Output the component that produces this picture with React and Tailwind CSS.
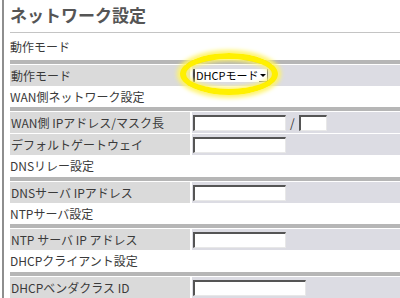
import React from 'react'

const font = { fontFamily: '"MS UI Gothic", "Noto Sans CJK JP", sans-serif' }

function TextInput({ w = 'w-[93px]' }) {
  return (
    <div
      className={`${w} h-[16px] bg-white border-t-2 border-l-2 border-b border-r border-t-[#555] border-l-[#555] border-b-[#e8e8e8] border-r-[#e8e8e8]`}
    />
  )
}

function SectionText({ children, className = 'h-[21px]' }) {
  return (
    <div className={`${className} flex items-center text-[12px] text-[#3a3a3a]`}>{children}</div>
  )
}

function Separator() {
  return <div className="h-[4px] bg-[#b6b6b6] mb-px" />
}

function Row({ label, children, first = true }) {
  return (
    <div className={`flex h-[21px] ${first ? '' : 'mt-px'}`}>
      <div className="w-[180px] shrink-0 bg-[#dadada] flex items-center pl-[1px] text-[12px] text-[#3a3a3a] whitespace-nowrap">
        {label}
      </div>
      <div className="ml-[2px] flex-1 bg-[#dcdce3] flex items-center pl-[1px]">{children}</div>
    </div>
  )
}

export default function App() {
  return (
    <div className="relative w-[400px] h-[298px] overflow-hidden bg-white" style={font}>
      <div className="ml-[2px] h-full border-l-2 border-[#8e8e8e] pl-[6px]">
        {/* Title */}
        <div className="h-[33px] border-b border-[#c4c4c4]">
          <h1 className="pt-[3px] text-[17px] leading-[24px] font-bold text-[#555]">
            ネットワーク設定
          </h1>
        </div>

        <SectionText className="h-[27px]">動作モード</SectionText>
        <Separator />
        <Row label="動作モード">
          <div className="flex items-center w-[75px] h-[13px] bg-white border-l-2 border-[#444]">
            <span className="flex-1 text-[11px] leading-none text-black pl-[1px] whitespace-nowrap">
              DHCPモード
            </span>
            <span className="w-[11px] h-[13px] flex items-center justify-center border-r border-b border-[#777]">
              <span className="w-0 h-0 border-l-[3px] border-r-[3px] border-t-[3px] border-l-transparent border-r-transparent border-t-black" />
            </span>
          </div>
        </Row>

        <SectionText>WAN側ネットワーク設定</SectionText>
        <Separator />
        <Row label="WAN側 IPアドレス/マスク長">
          <TextInput />
          <span className="mx-[4px] text-[12px] text-[#333]">/</span>
          <TextInput w="w-[28px]" />
        </Row>
        <Row label="デフォルトゲートウェイ" first={false}>
          <TextInput />
        </Row>

        <SectionText className="h-[22px]">DNSリレー設定</SectionText>
        <Separator />
        <Row label="DNSサーバ IPアドレス">
          <TextInput />
        </Row>

        <SectionText>NTPサーバ設定</SectionText>
        <Separator />
        <Row label="NTP サーバ IP アドレス">
          <TextInput />
        </Row>

        <SectionText className="h-[22px]">DHCPクライアント設定</SectionText>
        <Separator />
        <Row label="DHCPベンダクラス ID">
          <TextInput w="w-[113px]" />
        </Row>
      </div>

      {/* highlight ring */}
      <div className="absolute left-[180px] top-[53px] w-[98px] h-[42px] rounded-[50%] border-[6px] border-[#fff000] shadow-[0_0_4px_3px_#fff46a,inset_0_0_4px_2px_#fff46a]" />
    </div>
  )
}
